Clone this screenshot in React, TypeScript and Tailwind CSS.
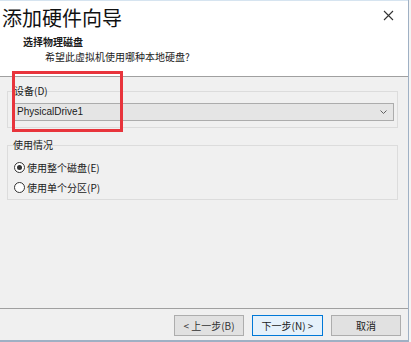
import React from "react";

const font = { fontFamily: '"Noto Sans CJK SC", "Microsoft YaHei", sans-serif' };

export default function App() {
  return (
    <div className="relative w-[411px] h-[342px] overflow-hidden bg-white flex text-[10px] text-[#1a1a1a]" style={font}>
      <div className="w-[408px] h-full flex flex-col border-t border-[#d6e4f0]">
        {/* Header */}
        <div className="h-[75px] bg-white flex flex-col relative">
          <div className="flex items-start justify-between h-[31px]">
            <div className="pl-[2px] pt-[3px] text-[20px] leading-[28px] font-normal text-[#111]">添加硬件向导</div>
            <div className="pr-[14px] pt-[9px] text-[#333]">
              <svg width="11" height="11" viewBox="0 0 11 11">
                <path d="M1 1 L10 10 M10 1 L1 10" stroke="#333" strokeWidth="1.1" />
              </svg>
            </div>
          </div>
          <div className="pl-[23px] pt-[3px] font-bold text-[10px] leading-[14px]">选择物理磁盘</div>
          <div className="pl-[45px] pt-[1px] text-[10px] leading-[14px]">希望此虚拟机使用哪种本地硬盘?</div>
        </div>
        <div className="h-px bg-[#a0a0a0]" />
        {/* Body */}
        <div className="flex-1 bg-[#f0f0f0] flex flex-col px-[7px]">
          {/* Device group */}
          <div className="mt-[7px] relative">
            <div className="pl-[7px] leading-[14px] relative">设备(D)</div>
            <div className="border border-[#dcdcdc] -mt-[7px] pt-[11px] pb-[6px] pl-[6px] pr-[3px] mr-[3px]">
              <div className="h-[18px] border border-[#acacac] bg-[#e5e5e5] flex items-center justify-between pl-[2px] pr-[6px]">
                <span className="leading-[14px]" style={{ fontFamily: '"Liberation Sans", Arial, sans-serif', fontSize: 10 }}>PhysicalDrive1</span>
                <svg width="7" height="4" viewBox="0 0 7 4">
                  <path d="M0.5 0.5 L3.5 3.5 L6.5 0.5" stroke="#606060" strokeWidth="1" fill="none" />
                </svg>
              </div>
            </div>
          </div>
          {/* Usage group */}
          <div className="mt-[10px] relative">
            <div className="pl-[6px] leading-[14px] relative">使用情况</div>
            <div className="border border-[#dcdcdc] -mt-[7px] pt-[13px] pb-[4px] px-[6px] flex flex-col gap-[4px] mr-[3px]">
              <div className="flex items-center gap-[2px] h-[16px]">
                <span className="w-[11px] h-[11px] rounded-full border border-[#333] bg-white flex items-center justify-center">
                  <span className="w-[5px] h-[5px] rounded-full bg-[#333]" />
                </span>
                <span>使用整个磁盘(E)</span>
              </div>
              <div className="flex items-center gap-[2px] h-[16px]">
                <span className="w-[11px] h-[11px] rounded-full border border-[#333] bg-white" />
                <span>使用单个分区(P)</span>
              </div>
            </div>
          </div>
          <div className="flex-1" />
        </div>
        <div className="h-px bg-[#a0a0a0]" />
        {/* Footer */}
        <div className="h-[31px] bg-[#f0f0f0] flex items-start justify-end pt-[6px] pr-[7px] gap-[8px]">
          <div className="w-[70px] h-[21px] border border-[#adadad] bg-[#e1e1e1] flex items-center justify-center text-[#333]">&lt; 上一步(B)</div>
          <div className="w-[71px] h-[21px] border border-[#0078d7] bg-[#e5f1fb] flex items-center justify-center">下一步(N) &gt;</div>
          <div className="w-[70px] h-[21px] border border-[#adadad] bg-[#e1e1e1] flex items-center justify-center">取消</div>
        </div>
        <div className="h-[2px] bg-[#9fb0c4]" />
      </div>
      <div className="w-[3px] h-full flex">
        <div className="w-px bg-[#9fb0c4]" />
        <div className="flex-1 bg-[#f4f4f4]" />
      </div>
      {/* red annotation box */}
      <div className="absolute left-[12px] top-[71px] w-[111px] h-[61px] border-[3px] border-[#e8343c]" />
    </div>
  );
}
